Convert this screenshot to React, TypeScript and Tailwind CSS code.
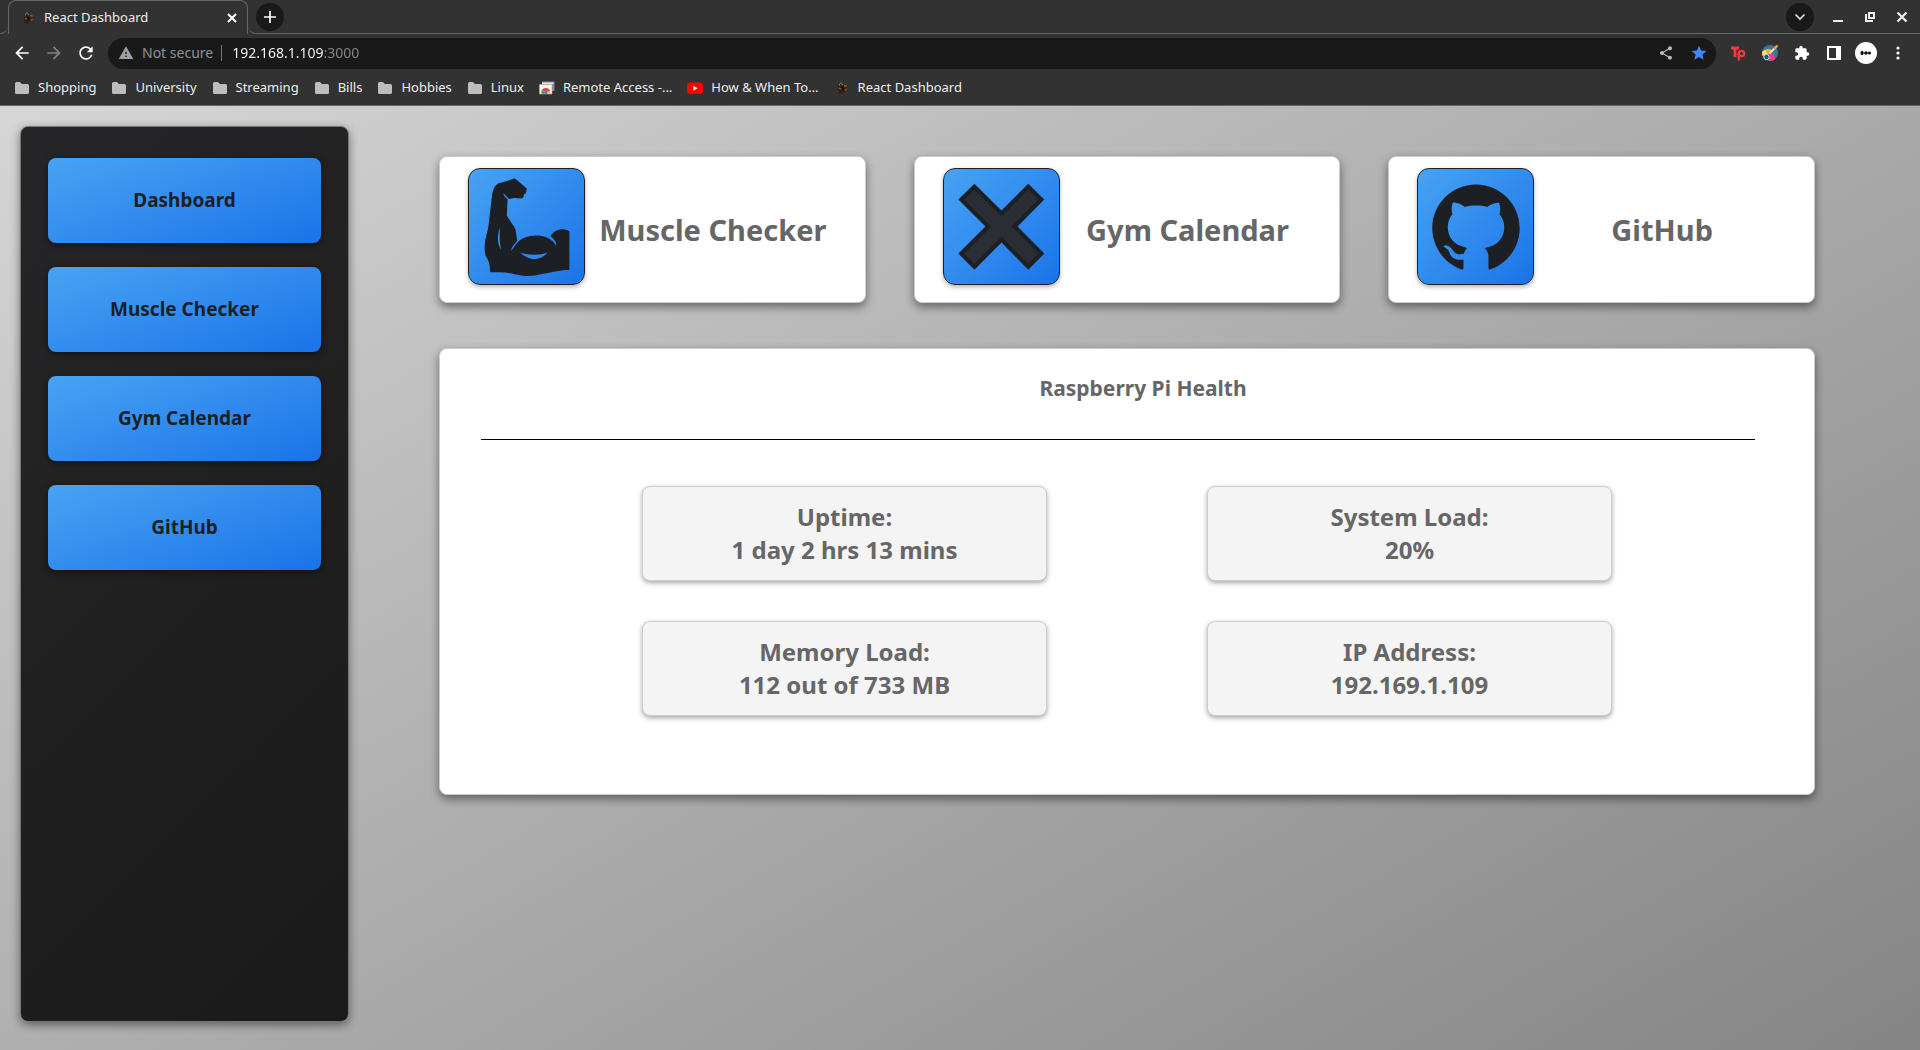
import React from "react";
import { AiFillGithub } from "react-icons/ai";
import { MdArrowBack, MdArrowForward, MdRefresh, MdShare, MdStar, MdExtension, MdWarning } from "react-icons/md";

const sections = ["Dashboard", "Muscle Checker", "Gym Calendar", "GitHub"];

const stats = [
  { label: "Uptime:", value: "1 day 2 hrs 13 mins" },
  { label: "System Load:", value: "20%" },
  { label: "Memory Load:", value: "112 out of 733 MB" },
  { label: "IP Address:", value: "192.169.1.109" },
];

function Favicon() {
  return (
    <svg viewBox="0 0 16 16" className="size-4 shrink-0" aria-hidden="true">
      <path d="M4 6 6 5 8 5.500 11 6 12 9 10 13 7 14 4 12Z" fill="#35211a" />
      <path d="M5.500 5.500C5 3 8 1.500 8.500 5" fill="none" stroke="#8d8178" strokeWidth="1" />
      <path d="M10 5.500 12.500 6M11 10.500 12.500 9M5 8 7 9" stroke="#a85c1c" strokeWidth="1.300" />
      <path d="M7 7 9 8 8.500 11" fill="none" stroke="#15100e" strokeWidth="1.500" />
    </svg>
  );
}

function FolderIcon() {
  return (
    <svg viewBox="0 0 16 16" className="size-4 shrink-0" aria-hidden="true">
      <path d="M1 3.500Q1 2 2.500 2H6L7.800 4H13.500Q15 4 15 5.500V12.500Q15 14 13.500 14H2.500Q1 14 1 12.500Z" fill="#bdbdbd" />
    </svg>
  );
}

function RemoteIcon() {
  return (
    <svg viewBox="0 0 16 16" className="size-4 shrink-0" aria-hidden="true">
      <path d="M3 1.500H15.500V11H3Z" fill="#8b8b8b" />
      <path d="M3 2.500H14.500V4H3Z" fill="#e8e8e8" />
      <path d="M.5 4.500H13V14H.5Z" fill="#f4f4f4" stroke="#aaa" strokeWidth=".6" />
      <path d="M2.500 11A4.600 4.600 0 0 1 11.200 11L8.500 12A2 2 0 0 0 5 12Z" fill="#e2463a" />
      <path d="M2.500 11 5.500 12 5.500 13.800H2.500Z" fill="#2ca14c" />
      <path d="M11.200 11 8.500 11.500V13.800H11.200Z" fill="#f7c52c" />
      <circle cx="6.800" cy="12.500" r="1.700" fill="#3c7ff0" />
    </svg>
  );
}

function YoutubeIcon() {
  return (
    <svg viewBox="0 0 16 16" className="size-4 shrink-0" aria-hidden="true">
      <rect x="0" y="2.500" width="16" height="11.500" rx="3" fill="#f00" />
      <path d="M6.400 5.700V10.700L10.600 8.200Z" fill="#fff" />
    </svg>
  );
}

const bookmarks = [
  { name: "Shopping", icon: FolderIcon },
  { name: "University", icon: FolderIcon },
  { name: "Streaming", icon: FolderIcon },
  { name: "Bills", icon: FolderIcon },
  { name: "Hobbies", icon: FolderIcon },
  { name: "Linux", icon: FolderIcon },
  { name: "Remote Access -...", icon: RemoteIcon },
  { name: "How & When To...", icon: YoutubeIcon },
  { name: "React Dashboard", icon: Favicon },
];

function TabStrip() {
  return (
    <div className="flex h-[34px]">
      <div className="w-2 rounded-br-lg border-b border-[#666]" />
      <div className="flex w-[240px] items-center rounded-t-lg border border-b-0 border-[#666] pr-[7px] pl-[11px]">
        <Favicon />
        <span className="ml-2 flex-1 text-[13px] text-[#eee]">React Dashboard</span>
        <button aria-label="Close tab" className="grid size-4 place-items-center text-white">
          <svg viewBox="0 0 16 16" className="size-4"><path d="M4 4 12 12M12 4 4 12" stroke="currentColor" strokeWidth="2" /></svg>
        </button>
      </div>
      <div className="flex flex-1 items-center rounded-bl-lg border-b border-[#666] pr-2.5 pl-2">
        <button aria-label="New tab" className="grid size-7 place-items-center rounded-full bg-[#191919] text-white">
          <svg viewBox="0 0 12 12" className="size-3"><path d="M6 0V12M0 6H12" stroke="currentColor" strokeWidth="1.700" /></svg>
        </button>
        <button aria-label="Search tabs" className="ml-auto grid size-7 place-items-center rounded-full bg-[#191919] text-[#ddd]">
          <svg viewBox="0 0 12 12" className="size-3"><path d="M1.500 3.500 6 8 10.500 3.500" fill="none" stroke="currentColor" strokeWidth="1.700" /></svg>
        </button>
        <div className="ml-4 flex gap-4 text-[#eee]">
          <button aria-label="Minimize" className="grid size-4 place-items-center">
            <svg viewBox="0 0 16 16" className="size-4"><path d="M3 12H13" stroke="currentColor" strokeWidth="2" /></svg>
          </button>
          <button aria-label="Restore" className="grid size-4 place-items-center">
            <svg viewBox="0 0 16 16" className="size-4"><path d="M7 4H12V9H7ZM4 5V12H11" fill="none" stroke="currentColor" strokeWidth="2" /></svg>
          </button>
          <button aria-label="Close window" className="grid size-4 place-items-center">
            <svg viewBox="0 0 16 16" className="size-4"><path d="M3.500 3.500 12.500 12.500M12.500 3.500 3.500 12.500" stroke="currentColor" strokeWidth="2.200" /></svg>
          </button>
        </div>
      </div>
    </div>
  );
}

function Toolbar() {
  return (
    <div className="flex h-[38px] items-center pr-3.5 pl-3">
      <div className="flex gap-3 text-white">
        <button aria-label="Back"><MdArrowBack className="size-5" /></button>
        <button aria-label="Forward" className="text-[#828282]"><MdArrowForward className="size-5" /></button>
        <button aria-label="Reload"><MdRefresh className="size-5" /></button>
      </div>
      <div className="ml-3 flex h-[31px] flex-1 items-center rounded-full bg-[#191919] pr-2 pl-2.5 text-sm">
        <MdWarning className="size-4 text-[#9aa0a6]" />
        <label htmlFor="address" className="ml-2 text-[#8e9297]">Not secure</label>
        <span className="mr-2.5 ml-2 h-4 w-px bg-[#777]" />
        <input
          id="address"
          type="text"
          defaultValue="192.168.1.109:3000"
          className="min-w-0 flex-1 bg-linear-to-r from-white from-[92px] to-[#858585] to-[92px] bg-clip-text text-transparent outline-none"
        />
        <button aria-label="Share" className="mr-4 text-[#bbb]"><MdShare className="size-4" /></button>
        <button aria-label="Bookmark this page" className="text-[#4285f4]"><MdStar className="size-[18px]" /></button>
      </div>
      <div className="ml-3.5 flex items-center gap-4 text-white">
        <button aria-label="Tp extension" className="grid size-4 place-items-center">
          <svg viewBox="0 0 16 16" className="size-4">
            <path d="M1 3H9M5 3V12" stroke="#f23b3b" strokeWidth="3" fill="none" />
            <circle cx="11.500" cy="8.500" r="2.700" stroke="#f23b3b" strokeWidth="2.300" fill="none" />
            <path d="M8.700 8V15.500" stroke="#f23b3b" strokeWidth="2.300" />
          </svg>
        </button>
        <button aria-label="Paint extension" className="grid size-4 place-items-center">
          <svg viewBox="0 0 16 16" className="size-4">
            <circle cx="8" cy="8" r="8" fill="#3f7690" />
            <path d="M0 7C3 4 7 3.500 10 5L8 9 5 9.500 .5 11Z" fill="#f9e06a" />
            <path d="M4 5.500 9 5 8 9 5 8.500Z" fill="#f0a22d" />
            <path d="M8 8 12 9 13 14A8 8 0 0 1 7 16Z" fill="#ef3d93" />
            <circle cx="4.500" cy="12" r="2.700" fill="#265069" stroke="#c9e1e8" />
            <path d="M7.500 8.500 12.500 3.500" stroke="#e8ecec" strokeWidth="1.800" />
            <path d="M12 4 15.500 .5" stroke="#f3a53b" strokeWidth="2.400" />
          </svg>
        </button>
        <button aria-label="Extensions"><MdExtension className="size-4" /></button>
        <button aria-label="Side panel" className="grid size-4 place-items-center">
          <svg viewBox="0 0 16 16" className="size-4"><path d="M1 1H15V15H1ZM3 3V13H10V3Z" fill="currentColor" fillRule="evenodd" /></svg>
        </button>
        <button aria-label="Profile" className="-mx-[3px] grid size-[22px] place-items-center rounded-full bg-white">
          <svg viewBox="0 0 22 22" className="size-[22px]">
            <path d="M6 11H15" stroke="#222" strokeWidth="1" fill="none" />
            <ellipse cx="7" cy="11" rx="1.500" ry="2.200" fill="#111" />
            <circle cx="11" cy="11" r="1.700" fill="#111" />
            <circle cx="14.500" cy="11" r="1.600" fill="#111" />
          </svg>
        </button>
        <button aria-label="Menu" className="grid size-4 place-items-center">
          <svg viewBox="0 0 16 16" className="size-4" fill="currentColor"><circle cx="8" cy="3" r="1.600" /><circle cx="8" cy="8" r="1.600" /><circle cx="8" cy="13" r="1.600" /></svg>
        </button>
      </div>
    </div>
  );
}

function BookmarkBar() {
  return (
    <nav aria-label="Bookmarks" className="flex h-[34px] items-center gap-[15px] border-b border-[#666] pb-0.5 pl-3.5 text-[13px] text-[#eee]">
      {bookmarks.map(({ name, icon: Icon }) => (
        <a key={name} href="#" className="flex items-center gap-2 whitespace-nowrap">
          <Icon />
          {name}
        </a>
      ))}
    </nav>
  );
}

function MuscleIcon() {
  return (
    <svg viewBox="3 3 346 344" className="size-full" aria-hidden="true">
      <path
        fill="#1c1f23"
        d="M141 30 177 61 174 75 168 79 167 87 160 91 140 89 123 92C117 88 114 80 106 76L109 83 119 93 117 142C124 156 137 170 143 184C145 195 147 210 148 218C140 228 131 236 130 249C137 239 143 229 151 221C164 208 182 203 205 202C228 202 243 209 254 219C261 225 263 230 265 234C267 222 261 213 248 204C256 190 270 183 284 183C291 183 297 185 305 189V305C277 306 255 312 236 316C211 321 199 324 180 324C160 324 144 320 129 316C109 312 88 314 69 313L66 309C67 286 61 277 53 263C49 249 50 229 52 215L61 178 73 75C77 60 83 49 92 45C109 40 125 36 141 30Z"
      />
      <path fill="#3690ee" d="M96 178C88 201 88 227 99 245C95 222 95 199 96 178Z" />
      <path fill="#2d86eb" d="M157 253C184 262 215 262 240 253C216 280 184 280 157 253Z" />
    </svg>
  );
}

function CrossIcon() {
  return (
    <svg viewBox="3 3 344 344" className="size-full" aria-hidden="true">
      <path d="M94 47 175 127 255 47 303 94 223 175 303 256 255 304 175 223 94 304 46 256 127 175 46 94Z" fill="#1c1f23" />
      <path d="M94 65 175 145 255 65 286 94 205 175 286 256 255 287 175 206 94 287 63 256 144 175 63 94Z" fill="#2a2e34" />
    </svg>
  );
}

function GithubIcon() {
  return (
    <span className="grid size-full place-items-center text-[#1c1f23]">
      <AiFillGithub className="size-[100px]" aria-hidden="true" />
    </span>
  );
}

const shortcuts = [
  { name: "Muscle Checker", icon: MuscleIcon },
  { name: "Gym Calendar", icon: CrossIcon },
  { name: "GitHub", icon: GithubIcon },
];

export default function App() {
  return (
    <div className="flex min-h-screen flex-col font-['Noto_Sans',sans-serif]">
      <header className="bg-[#323232]">
        <TabStrip />
        <Toolbar />
        <BookmarkBar />
      </header>
      <div className="flex flex-1 bg-linear-150 from-[#d6d6d6] to-[#858585] pr-[105px] pb-7 pl-5">
        <nav
          aria-label="Sections"
          className="mt-5 flex w-[329px] shrink-0 flex-col gap-6 rounded-lg border border-[#777] bg-linear-135 from-[#262628] to-[#1a1a1a] px-[27px] pt-[31px] shadow-[0_3px_10px_rgba(0,0,0,0.45)]"
        >
          {sections.map((name) => (
            <a
              key={name}
              href="#"
              className="grid h-[85px] place-items-center rounded-lg bg-linear-160 from-[#48a3f3] to-[#1a73e8] text-[19px] font-bold text-[#1c1f23] shadow-[0_2px_6px_rgba(0,0,0,0.5)]"
            >
              {name}
            </a>
          ))}
        </nav>
        <main className="ml-[90px] min-w-0 flex-1 pt-[50px] font-bold text-[#666]">
          <div className="grid grid-cols-3 gap-12">
            {shortcuts.map(({ name, icon: Icon }) => (
              <a
                key={name}
                href="#"
                className="flex h-[147px] items-start rounded-lg border border-[#ccc] bg-white py-[11px] pr-6 pl-7 shadow-[0_4px_10px_rgba(0,0,0,0.45)]"
              >
                <span className="size-[117px] shrink-0 overflow-hidden rounded-xl border border-[#1c1f23] bg-linear-135 from-[#48a3f3] to-[#1a73e8] shadow-[0_2px_4px_rgba(0,0,0,0.3)]">
                  <Icon />
                </span>
                <span className="flex-1 self-center text-center text-[29px]">{name}</span>
              </a>
            ))}
          </div>
          <section className="mt-[45px] rounded-lg border border-[#ccc] bg-white pb-[78px] shadow-[0_4px_10px_rgba(0,0,0,0.45)]">
            <h2 className="mr-[59px] ml-[41px] border-b border-black pt-6 pb-[35px] pl-[50px] text-center text-[21px] leading-[31px]">
              Raspberry Pi Health
            </h2>
            <dl className="mx-auto mt-[46px] grid w-[970px] max-w-full grid-cols-2 gap-x-40 gap-y-10">
              {stats.map(({ label, value }) => (
                <div
                  key={label}
                  className="rounded-lg border border-[#ccc] bg-[#f4f4f4] pt-[13px] pb-3.5 text-center text-2xl leading-[33px] shadow-[0_2px_5px_rgba(0,0,0,0.35)]"
                >
                  <dt>{label}</dt>
                  <dd>{value}</dd>
                </div>
              ))}
            </dl>
          </section>
        </main>
      </div>
    </div>
  );
}
